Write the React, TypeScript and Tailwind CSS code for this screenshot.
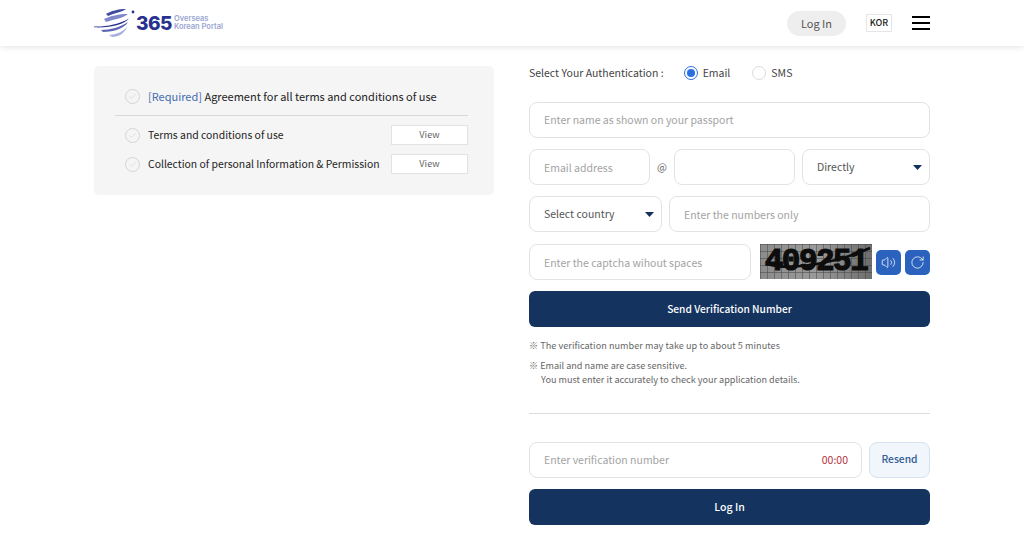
import React from 'react';
import { Volume2, RotateCw, Check } from 'lucide-react';

const field = "h-[36px] rounded-[8px] border border-[#e3e3e3] bg-white px-[14px] text-[10.5px] text-[#555] outline-none placeholder:text-[#a3a3a3]";

const Caret = () => (
  <svg width="9" height="5" viewBox="0 0 9 5" className="shrink-0">
    <path d="M0 0h9L4.500 5z" fill="#14305c" />
  </svg>
);

const CheckDot = () => (
  <span className="flex h-[15px] w-[15px] shrink-0 items-center justify-center rounded-full border border-[#d4d4d4]">
    <Check size={9} strokeWidth={1.5} className="text-[#cfcfcf]" />
  </span>
);

const Logo = () => (
  <div className="flex items-center">
    <svg width="43" height="30" viewBox="0 0 43 30">
      <path d="M12 6C17 3 24 1 32 1c-4 3-11 4-18 7z" fill="#3f4aa3" />
      <path d="M10 11c6-3 15-5 24-5-4 4-13 5-22 8z" fill="#7f88c8" />
      <path d="M0 18.500c11 .5 25-2 35-8-5 6-18 9.500-35 8.800z" fill="#27328f" />
      <path d="M7 22c9 0 20-3 27-8-3 6-14 10-25 10z" fill="#5b66b5" />
      <path d="M15 27c7-.5 14-3 18-8-2 6-8 10-15 10z" fill="#a9b0de" />
      <circle cx="39" cy="4" r="1.400" fill="#27328f" />
    </svg>
    <span className="ml-[-1px] font-['Inter',sans-serif] text-[19px] leading-none font-extrabold tracking-[-0.5px] text-[#27318e]">365</span>
    <span className="ml-[2px] flex flex-col font-['Inter',sans-serif] text-[7.5px] leading-[8px] font-semibold text-[#9aa6d0]">
      <span>Overseas</span>
      <span>Korean Portal</span>
    </span>
  </div>
);

const Captcha = () => (
  <div className="relative flex h-[35px] w-[112px] items-center justify-center overflow-hidden bg-[#8b8b8b]">
    <svg width="112" height="35" className="absolute inset-0">
      <defs>
        <pattern id="cap-grid" width="7" height="7" patternUnits="userSpaceOnUse">
          <path d="M7 0H0V7" fill="none" stroke="#444" strokeWidth="1" />
        </pattern>
        <linearGradient id="cap-fade" x1="0" x2="1" y1="0" y2="0">
          <stop offset="0" stopColor="#8c8c8c" />
          <stop offset="0.5" stopColor="#9a9a9a" />
          <stop offset="1" stopColor="#6e6e6e" />
        </linearGradient>
      </defs>
      <rect width="112" height="35" fill="url(#cap-fade)" />
      <rect width="112" height="35" fill="url(#cap-grid)" />
      <path d="M8 20C24 26 70 22 110 4" fill="none" stroke="#0d0d0d" strokeWidth="2.5" />
    </svg>
    <span className="relative font-['Liberation_Mono',monospace] text-[31px] leading-none font-bold tracking-[-1.5px] text-[#0d0d0d] [-webkit-text-stroke:1.2px_#0d0d0d]">409251</span>
  </div>
);

const App = () => {
  return (
    <div className="h-[533px] w-[1024px] overflow-hidden bg-white font-['Noto_Sans_CJK_KR','Noto_Sans',sans-serif]">
      <header className="flex h-[46px] items-center justify-between pr-[94px] pl-[94px] shadow-[0_1px_6px_rgba(0,0,0,0.12)]">
        <Logo />
        <div className="flex items-center">
          <button className="h-[25px] w-[59px] rounded-full bg-[#eeeeee] text-[11px] text-[#555]">Log In</button>
          <span className="ml-[20px] flex h-[18px] w-[26px] items-center justify-center border border-[#e5e5e5] text-[9px] font-medium text-[#222]">KOR</span>
          <div className="ml-[20px] flex w-[18px] flex-col gap-[4px]">
            <span className="h-[2px] bg-black" />
            <span className="h-[2px] bg-black" />
            <span className="h-[2px] bg-black" />
          </div>
        </div>
      </header>

      <main className="flex items-start pt-[20px] pl-[94px]">
        <section className="h-[129px] w-[400px] rounded-[5px] bg-[#f5f5f5] pt-[15px] pr-[26px] pl-[21px]">
          <div className="flex h-[30px] items-center gap-[8px] pl-[10px]">
            <CheckDot />
            <p className="text-[11px] text-[#222]"><span className="text-[#3f6cb0]">[Required]</span> Agreement for all terms and conditions of use</p>
          </div>
          <div className="mt-[4px] border-t border-[#d9d9d9] pt-[9px]">
            <div className="flex h-[20px] items-center pl-[10px]">
              <CheckDot />
              <p className="ml-[8px] flex-1 text-[10.4px] text-[#222]">Terms and conditions of use</p>
              <button className="h-[20px] w-[77px] border border-[#e2e2e2] bg-white text-[9.2px] text-[#666]">View</button>
            </div>
            <div className="mt-[9px] flex h-[20px] items-center pl-[10px]">
              <CheckDot />
              <p className="ml-[8px] flex-1 text-[10.4px] text-[#222]">Collection of personal Information &amp; Permission</p>
              <button className="h-[20px] w-[77px] border border-[#e2e2e2] bg-white text-[9.2px] text-[#666]">View</button>
            </div>
          </div>
        </section>

        <section className="ml-[35px] flex w-[401px] flex-col">
          <div className="-mt-px flex h-[16px] items-center text-[10.5px] text-[#444]">
            <span>Select Your Authentication :</span>
            <span className="ml-[20px] flex h-[14px] w-[14px] items-center justify-center rounded-full border border-[#2c6fe0]">
              <span className="h-[8px] w-[8px] rounded-full bg-[#2c6fe0]" />
            </span>
            <span className="ml-[5px] text-[#444]">Email</span>
            <span className="ml-[22px] h-[14px] w-[14px] rounded-full border border-[#dcdcdc]" />
            <span className="ml-[5px]">SMS</span>
          </div>

          <input className={`${field} mt-[21px] w-full pb-[2px]`} placeholder="Enter name as shown on your passport" />

          <div className="mt-[11px] flex items-center">
            <input className={`${field} w-[121px]`} placeholder="Email address" />
            <span className="w-[24px] text-center text-[10.5px] text-[#666]">@</span>
            <input className={`${field} w-[121px]`} />
            <div className={`${field} ml-[7px] flex w-[128px] items-center justify-between pr-[7px]`}>
              <span>Directly</span>
              <Caret />
            </div>
          </div>

          <div className="mt-[11px] flex items-center gap-[7px]">
            <div className={`${field} flex w-[133px] items-center justify-between pr-[7px]`}>
              <span>Select country</span>
              <Caret />
            </div>
            <input className={`${field} min-w-0 flex-1`} placeholder="Enter the numbers only" />
          </div>

          <div className="mt-[12px] flex items-center">
            <input className={`${field} w-[222px]`} placeholder="Enter the captcha wihout spaces" />
            <div className="ml-[9px] self-start"><Captcha /></div>
            <button className="ml-[4px] flex h-[25px] w-[25px] items-center justify-center rounded-[5px] bg-[#2a62bd] text-white">
              <Volume2 size={15} strokeWidth={1.25} />
            </button>
            <button className="ml-[4px] flex h-[25px] w-[25px] items-center justify-center rounded-[5px] bg-[#2a62bd] text-white">
              <RotateCw size={15} strokeWidth={1.25} />
            </button>
          </div>

          <button className="mt-[11px] h-[36px] w-full rounded-[6px] bg-[#14335f] text-[10.2px] font-medium text-white">Send Verification Number</button>

          <div className="mt-[11px] text-[9.1px] leading-[14px] text-[#666]">
            <p className="tracking-[0.05px]">※ The verification number may take up to about 5 minutes</p>
            <p className="mt-[6px]">※ Email and name are case sensitive.</p>
            <p className="pl-[12px]">You must enter it accurately to check your application details.</p>
          </div>

          <div className="mt-[27px] h-px bg-[#dcdcdc]" />

          <div className="mt-[28px] flex items-center">
            <div className="relative w-[333px]">
              <input className={`${field} w-full pb-[2px]`} placeholder="Enter verification number" />
              <span className="absolute top-[10px] right-[14px] text-[10.5px] leading-[16px] text-[#b5313c]">00:00</span>
            </div>
            <button className="ml-[7px] h-[36px] w-[61px] rounded-[8px] border border-[#d5e2f0] bg-[#f1f6fc] pb-[2px] text-[10.3px] font-medium text-[#335c96]">Resend</button>
          </div>

          <button className="mt-[11px] h-[36px] w-full rounded-[6px] bg-[#14335f] text-[10.5px] font-medium text-white">Log In</button>
        </section>
      </main>
    </div>
  );
};

export default App;
